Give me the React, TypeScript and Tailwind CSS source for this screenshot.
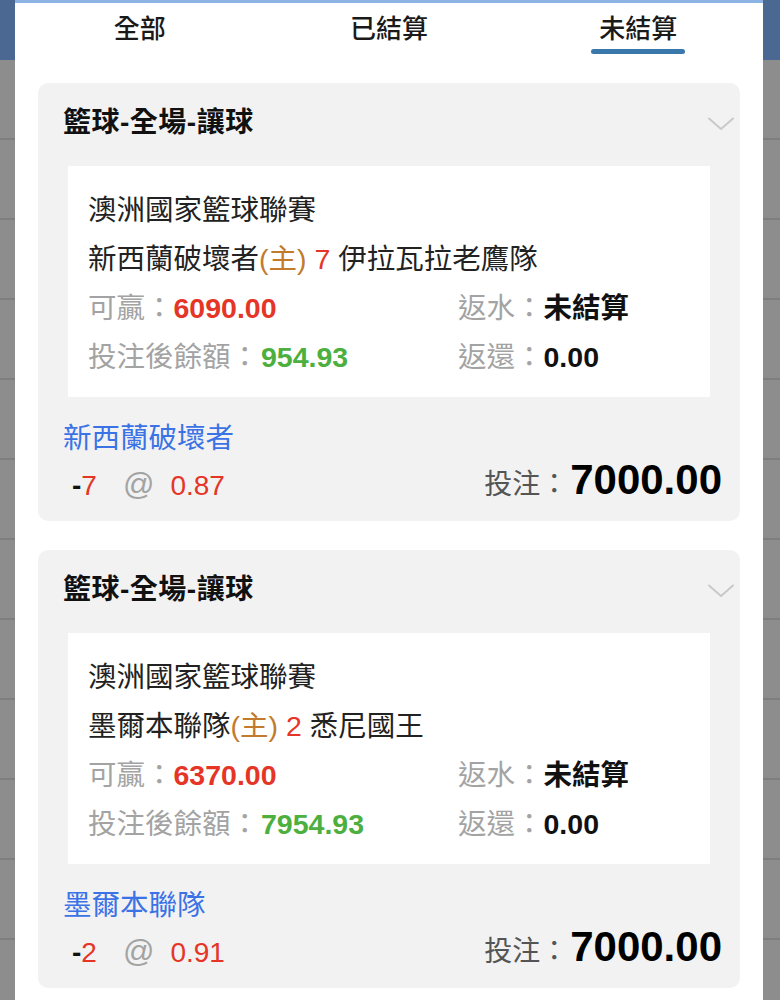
import React from 'react';

type Bet = {
  market: string;
  league: string;
  home: string;
  line: string;
  away: string;
  win: string;
  balance: string;
  pick: string;
  odds: string;
  stake: string;
};

const bets: Bet[] = [
  {
    market: '籃球-全場-讓球',
    league: '澳洲國家籃球聯賽',
    home: '新西蘭破壞者',
    line: '7',
    away: '伊拉瓦拉老鷹隊',
    win: '6090.00',
    balance: '954.93',
    pick: '新西蘭破壞者',
    odds: '0.87',
    stake: '7000.00',
  },
  {
    market: '籃球-全場-讓球',
    league: '澳洲國家籃球聯賽',
    home: '墨爾本聯隊',
    line: '2',
    away: '悉尼國王',
    win: '6370.00',
    balance: '7954.93',
    pick: '墨爾本聯隊',
    odds: '0.91',
    stake: '7000.00',
  },
];

const tabs = ['全部', '已結算', '未結算'];

function Backdrop({ width }: { width: string }) {
  return (
    <div className={`${width} shrink-0 flex flex-col overflow-hidden bg-[#8d8d8d]`}>
      <div className="h-[60px] shrink-0 bg-[#4a6891]"></div>
      <div className="h-[78px] shrink-0"></div>
      {Array.from({ length: 11 }).map((_, i) => (
        <div key={i} className="h-[80px] shrink-0 border-t-2 border-[#7e7e7e]"></div>
      ))}
    </div>
  );
}

function BetCard({ bet }: { bet: Bet }) {
  return (
    <div className="shrink-0 rounded-[10px] bg-[#f2f2f2]">
      <div className="h-[83px] pt-[24px] pl-[25px] pr-[6px] flex items-start justify-between">
        <span className="text-[28px] leading-[32px] font-bold tracking-[0.5px] text-[#111]">{bet.market}</span>
        <svg width="26" height="14" viewBox="0 0 26 14" className="mt-[10px]" fill="none">
          <path d="M1 1.5 L13 12 L25 1.5" stroke="#c9c9c9" strokeWidth="2" strokeLinecap="round" strokeLinejoin="round" />
        </svg>
      </div>

      <div className="mx-[30px] h-[231px] bg-white px-[20px] pt-[20px] text-[28.5px] leading-[49px]">
        <div className="text-[#222]">{bet.league}</div>
        <div className="text-[#222]">
          {bet.home}
          <span className="text-[#c27a2c]">(主)</span>
          <span className="text-[#e53527]"> {bet.line} </span>
          {bet.away}
        </div>
        <div className="grid grid-cols-[370px_1fr]">
          <div>
            <span className="text-[#a3a3a3]">可贏：</span>
            <span className="font-bold text-[#e53527]">{bet.win}</span>
          </div>
          <div>
            <span className="text-[#a3a3a3]">返水：</span>
            <span className="font-bold text-[#111]">未結算</span>
          </div>
        </div>
        <div className="grid grid-cols-[370px_1fr]">
          <div>
            <span className="text-[#a3a3a3]">投注後餘額：</span>
            <span className="ml-[2px] font-bold text-[#4caf3e]">{bet.balance}</span>
          </div>
          <div>
            <span className="text-[#a3a3a3]">返還：</span>
            <span className="font-bold text-[#111]">0.00</span>
          </div>
        </div>
      </div>

      <div className="mt-[20px] h-[40px] px-[25px] text-[28.5px] leading-[42px] text-[#3b72e6]">{bet.pick}</div>

      <div className="flex h-[50px] mb-[14px] items-center justify-between pl-[25px] pr-[18px]">
        <div className="flex items-baseline pl-[9px] pt-[6px] text-[28px] leading-[40px]">
          <span className="font-bold text-[#111]">-</span>
          <span className="text-[#e53527]">{bet.line}</span>
          <span className="ml-[26px] text-[31px] text-[#a3a3a3]">@</span>
          <span className="ml-[16px] text-[#e53527]">{bet.odds}</span>
        </div>
        <div className="flex items-baseline leading-[48px]">
          <span className="text-[28px] text-[#555]">投注：</span>
          <span className="ml-[2px] text-[42px] font-bold text-black">{bet.stake}</span>
        </div>
      </div>
    </div>
  );
}

export default function App() {
  return (
    <div
      className="flex w-[780px] h-[1000px] overflow-hidden bg-[#8d8d8d]"
      style={{ fontFamily: '"Liberation Sans", "Noto Sans CJK TC", sans-serif' }}
    >
      <Backdrop width="w-[15px]" />

      <div className="flex-1 flex flex-col overflow-hidden bg-white">
        <div className="h-[3px] shrink-0 bg-[#8cb3e4]"></div>
        <div className="grid grid-cols-3 h-[55px] shrink-0">
          {tabs.map((tab, idx) => (
            <div key={tab} className="flex flex-col items-center pt-[11px]">
              <span className="text-[26px] leading-[30px] font-medium text-[#1a1a1a]">{tab}</span>
              {idx === 2 && <div className="mt-[5px] h-[5px] w-[94px] rounded-full bg-[#3a77aa]"></div>}
            </div>
          ))}
        </div>

        <div className="flex flex-col gap-[29px] px-[23px] pt-[25px]">
          {bets.map((bet, idx) => (
            <BetCard key={idx} bet={bet} />
          ))}
        </div>
      </div>

      <Backdrop width="w-[17px]" />
    </div>
  );
}
